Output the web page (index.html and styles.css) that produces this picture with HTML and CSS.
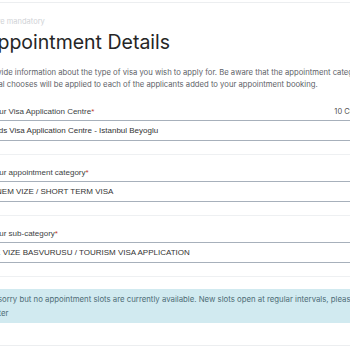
FILE: index.html
```html
<!DOCTYPE html>
<html lang="en">
<head>
    <meta charset="UTF-8">
    <meta name="viewport" content="width=device-width, initial-scale=1.0">
    <title>Appointment Details</title>
    <link rel="stylesheet" href="styles.css">
</head>
<body>
    <div class="page">
        <div class="top-rule"></div>
        <p class="mandatory">All fields are mandatory</p>
        <h1>Appointment Details</h1>
        <p class="intro">Please provide information about the type of visa you wish to apply for. Be aware that the appointment category<br>an individual chooses will be applied to each of the applicants added to your appointment booking.</p>

        <div class="field">
            <div class="label-row">
                <label>Choose your Visa Application Centre<span class="req">*</span></label>
                <span class="count">10 Centres</span>
            </div>
            <div class="select">Netherlands Visa Application Centre - Istanbul Beyoglu</div>
        </div>

        <div class="field">
            <div class="label-row">
                <label>Choose your appointment category<span class="req">*</span></label>
            </div>
            <div class="select">KISA DONEM VIZE / SHORT TERM VISA</div>
        </div>

        <div class="field">
            <div class="label-row">
                <label>Choose your sub-category<span class="req">*</span></label>
            </div>
            <div class="select">TURISTIK VIZE BASVURUSU / TOURISM VISA APPLICATION</div>
        </div>

        <div class="alert">We are sorry but no appointment slots are currently available. New slots open at regular intervals, please try<br>again later</div>

        <div class="bottom-rule"></div>
    </div>
</body>
</html>
```

FILE: styles.css
```css
body {
    margin: 0;
    padding: 0;
    background: #fff;
    overflow: hidden;
    font-family: Inter, "Liberation Sans", sans-serif;
}
.page {
    width: 411px;
    margin-left: -39px;
}
.top-rule {
    margin-top: 2px;
    border-top: 1px solid #eceef0;
}
.mandatory {
    margin: 13px 0 0;
    font-size: 7.5px;
    line-height: 12px;
    color: #cfd2d6;
}
h1 {
    margin: 2px 0 0;
    padding-left: 23px;
    font-size: 19.5px;
    font-weight: 400;
    line-height: 24px;
    color: #262626;
}
.intro {
    margin: 13px 0 3px -2px;
    font-size: 7.7px;
    line-height: 12px;
    color: #5e6268;
    white-space: nowrap;
}
.field {
    padding: 11px 0 13px;
    border-bottom: 1px solid #eef0f2;
}
.label-row {
    display: flex;
    justify-content: space-between;
    align-items: center;
    height: 12px;
}
label {
    font-family: "Liberation Sans", Arial, sans-serif;
    font-size: 8px;
    color: #3c3f44;
}
.req {
    color: #c0392b;
}
.count {
    font-size: 7.5px;
    color: #555;
}
.select {
    margin-top: 3px;
    height: 19px;
    line-height: 19px;
    padding-left: 2px;
    border-style: solid;
    border-color: #a7b0bb;
    border-width: 1.5px 1px;
    font-family: "Liberation Sans", Arial, sans-serif;
    font-size: 8px;
    color: #333;
}
.alert {
    margin-top: 12px;
    padding: 3px 9px;
    background: #d1eaf0;
    font-size: 7.8px;
    line-height: 14px;
    color: #4f6d77;
    white-space: nowrap;
}
.bottom-rule {
    margin-top: 22px;
    border-top: 1px solid #eceef0;
}
```
